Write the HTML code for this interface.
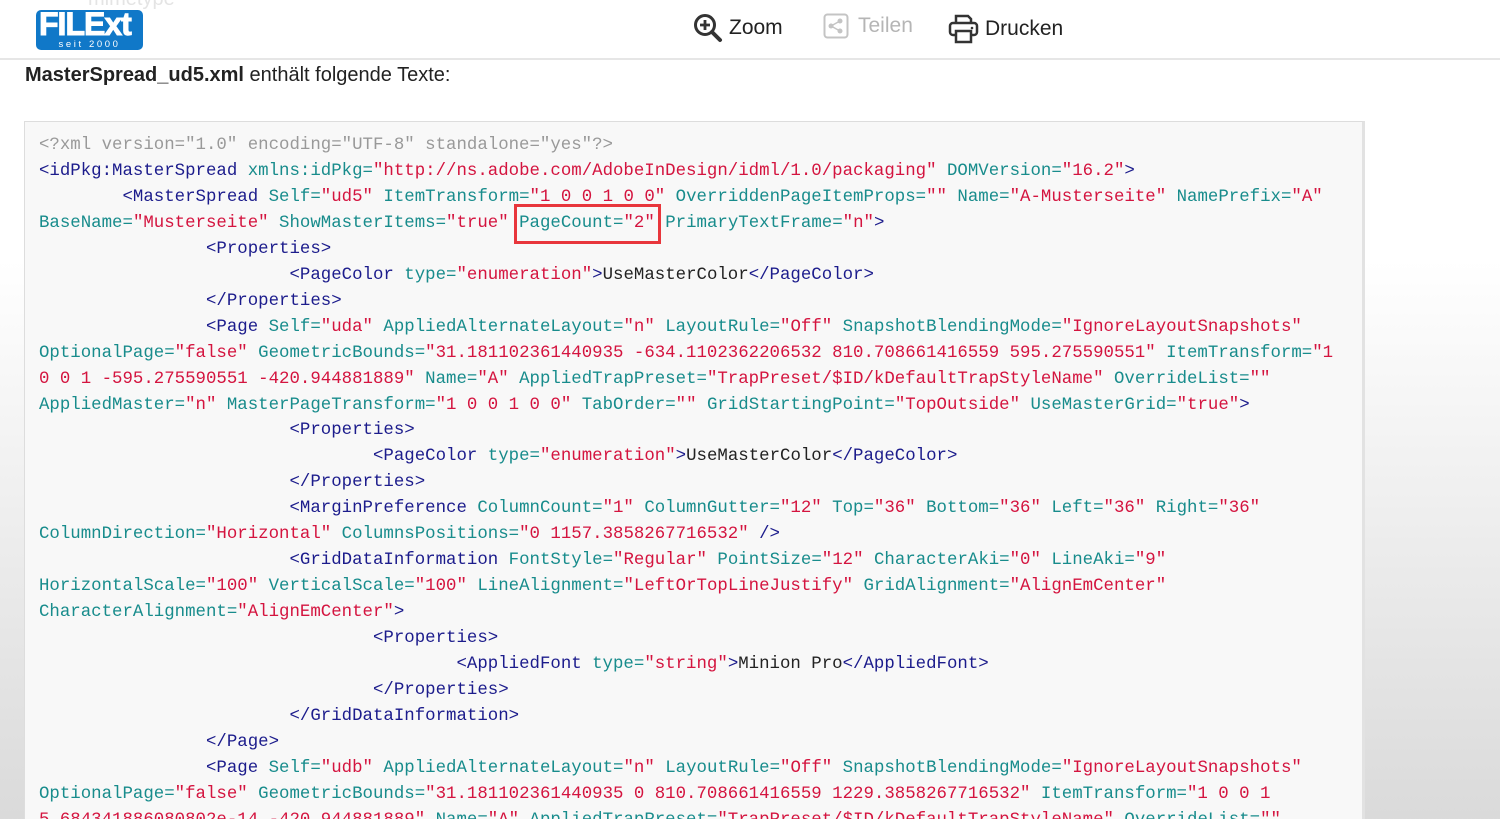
<!DOCTYPE html>
<html><head><meta charset="utf-8">
<style>
html,body{margin:0;padding:0;width:1500px;height:819px;overflow:hidden}
body{position:relative;font-family:"Liberation Sans",sans-serif;
background:linear-gradient(to bottom,#fff 0px,#fff 260px,#dadada 819px);}
.hdr{position:absolute;left:0;top:0;width:1500px;height:58px;background:#fff;border-bottom:2px solid #e6e6e6}
.mime{position:absolute;left:88px;top:-12px;font-size:20px;color:#e4e4e4}
.logo{position:absolute;left:36px;top:10px;width:107px;height:40px;background:#1078c8;border-radius:5px}
.logo .big{position:absolute;left:3px;top:-4px;font:900 32px "Liberation Sans",sans-serif;color:#fff;letter-spacing:-1px;-webkit-text-stroke:1px #fff}
.logo .small{position:absolute;left:0;width:107px;top:29px;text-align:center;font-size:9.5px;color:#fff;letter-spacing:2.6px}
.nav{position:absolute;top:13px;font-size:21px;color:#222;display:flex;align-items:center}
h1{position:absolute;left:25px;top:64px;margin:0;font-size:20px;font-weight:normal;color:#222}
.box{position:absolute;left:24px;top:121px;width:1337px;height:720px;background:#f8f8f8;border:1px solid #ddd;border-right:3px solid #e2e2e2}
pre{position:absolute;left:14px;top:11px;margin:0;font:17.4px/25.95px "Liberation Mono",monospace;color:#222}
.p{color:#999}.t{color:#1c1c8c}.a{color:#188c8c}.v{color:#d4143f}
.red{position:absolute;left:514px;top:204px;width:141px;height:34px;border:3px solid #e8363c}
</style></head><body>
<div class="hdr">
 <div class="mime">mimetype</div>
 <div class="logo"><div class="big">FILExt</div><div class="small">seit 2000</div></div>
 <div class="nav" style="left:693px">
  <svg width="30" height="30" viewBox="0 0 30 30"><circle cx="12" cy="12" r="9.5" fill="none" stroke="#333" stroke-width="3"/><path d="M7 12h10M12 7v10" stroke="#333" stroke-width="2.8"/><path d="M19 19l8 8" stroke="#333" stroke-width="4" stroke-linecap="round"/></svg>
  <span style="margin-left:6px">Zoom</span></div>
 <div class="nav" style="left:823px;color:#b5b5b5">
  <svg width="26" height="26" viewBox="0 0 26 26"><rect x="1.5" y="1.5" width="23" height="23" rx="3" fill="none" stroke="#c4c4c4" stroke-width="2"/><circle cx="8" cy="13" r="2.5" fill="#c4c4c4"/><circle cx="17" cy="8" r="2.5" fill="#c4c4c4"/><circle cx="17" cy="18" r="2.5" fill="#c4c4c4"/><path d="M8 13L17 8M8 13L17 18" stroke="#c4c4c4" stroke-width="1.5"/></svg>
  <span style="margin-left:9px">Teilen</span></div>
 <div class="nav" style="left:948px">
  <svg width="31" height="31" viewBox="0 0 31 31"><path d="M8 10V3h12l3 3v4" fill="none" stroke="#333" stroke-width="2.5"/><rect x="2" y="10" width="27" height="12" rx="3" fill="none" stroke="#333" stroke-width="2.5"/><rect x="8" y="18" width="15" height="11" fill="#fff" stroke="#333" stroke-width="2.5"/><circle cx="24" cy="15" r="1.3" fill="#333"/></svg>
  <span style="margin-left:6px">Drucken</span></div>
</div>
<h1><b>MasterSpread_ud5.xml</b> enthält folgende Texte:</h1>
<div class="box"><pre><span class="p">&lt;?xml version="1.0" encoding="UTF-8" standalone="yes"?&gt;</span>
<span class="t">&lt;idPkg:MasterSpread</span> <span class="a">xmlns:idPkg=</span><span class="v">"http://ns.adobe.com/AdobeInDesign/idml/1.0/packaging"</span> <span class="a">DOMVersion=</span><span class="v">"16.2"</span><span class="t">&gt;</span>
        <span class="t">&lt;MasterSpread</span> <span class="a">Self=</span><span class="v">"ud5"</span> <span class="a">ItemTransform=</span><span class="v">"1 0 0 1 0 0"</span> <span class="a">OverriddenPageItemProps=</span><span class="v">""</span> <span class="a">Name=</span><span class="v">"A-Musterseite"</span> <span class="a">NamePrefix=</span><span class="v">"A"</span>
<span class="a">BaseName=</span><span class="v">"Musterseite"</span> <span class="a">ShowMasterItems=</span><span class="v">"true"</span> <span class="a">PageCount=</span><span class="v">"2"</span> <span class="a">PrimaryTextFrame=</span><span class="v">"n"</span><span class="t">&gt;</span>
                <span class="t">&lt;Properties&gt;</span>
                        <span class="t">&lt;PageColor</span> <span class="a">type=</span><span class="v">"enumeration"</span><span class="t">&gt;</span>UseMasterColor<span class="t">&lt;/PageColor&gt;</span>
                <span class="t">&lt;/Properties&gt;</span>
                <span class="t">&lt;Page</span> <span class="a">Self=</span><span class="v">"uda"</span> <span class="a">AppliedAlternateLayout=</span><span class="v">"n"</span> <span class="a">LayoutRule=</span><span class="v">"Off"</span> <span class="a">SnapshotBlendingMode=</span><span class="v">"IgnoreLayoutSnapshots"</span>
<span class="a">OptionalPage=</span><span class="v">"false"</span> <span class="a">GeometricBounds=</span><span class="v">"31.181102361440935 -634.1102362206532 810.708661416559 595.275590551"</span> <span class="a">ItemTransform=</span><span class="v">"1
0 0 1 -595.275590551 -420.944881889"</span> <span class="a">Name=</span><span class="v">"A"</span> <span class="a">AppliedTrapPreset=</span><span class="v">"TrapPreset/$ID/kDefaultTrapStyleName"</span> <span class="a">OverrideList=</span><span class="v">""</span>
<span class="a">AppliedMaster=</span><span class="v">"n"</span> <span class="a">MasterPageTransform=</span><span class="v">"1 0 0 1 0 0"</span> <span class="a">TabOrder=</span><span class="v">""</span> <span class="a">GridStartingPoint=</span><span class="v">"TopOutside"</span> <span class="a">UseMasterGrid=</span><span class="v">"true"</span><span class="t">&gt;</span>
                        <span class="t">&lt;Properties&gt;</span>
                                <span class="t">&lt;PageColor</span> <span class="a">type=</span><span class="v">"enumeration"</span><span class="t">&gt;</span>UseMasterColor<span class="t">&lt;/PageColor&gt;</span>
                        <span class="t">&lt;/Properties&gt;</span>
                        <span class="t">&lt;MarginPreference</span> <span class="a">ColumnCount=</span><span class="v">"1"</span> <span class="a">ColumnGutter=</span><span class="v">"12"</span> <span class="a">Top=</span><span class="v">"36"</span> <span class="a">Bottom=</span><span class="v">"36"</span> <span class="a">Left=</span><span class="v">"36"</span> <span class="a">Right=</span><span class="v">"36"</span>
<span class="a">ColumnDirection=</span><span class="v">"Horizontal"</span> <span class="a">ColumnsPositions=</span><span class="v">"0 1157.3858267716532"</span> <span class="t">/&gt;</span>
                        <span class="t">&lt;GridDataInformation</span> <span class="a">FontStyle=</span><span class="v">"Regular"</span> <span class="a">PointSize=</span><span class="v">"12"</span> <span class="a">CharacterAki=</span><span class="v">"0"</span> <span class="a">LineAki=</span><span class="v">"9"</span>
<span class="a">HorizontalScale=</span><span class="v">"100"</span> <span class="a">VerticalScale=</span><span class="v">"100"</span> <span class="a">LineAlignment=</span><span class="v">"LeftOrTopLineJustify"</span> <span class="a">GridAlignment=</span><span class="v">"AlignEmCenter"</span>
<span class="a">CharacterAlignment=</span><span class="v">"AlignEmCenter"</span><span class="t">&gt;</span>
                                <span class="t">&lt;Properties&gt;</span>
                                        <span class="t">&lt;AppliedFont</span> <span class="a">type=</span><span class="v">"string"</span><span class="t">&gt;</span>Minion Pro<span class="t">&lt;/AppliedFont&gt;</span>
                                <span class="t">&lt;/Properties&gt;</span>
                        <span class="t">&lt;/GridDataInformation&gt;</span>
                <span class="t">&lt;/Page&gt;</span>
                <span class="t">&lt;Page</span> <span class="a">Self=</span><span class="v">"udb"</span> <span class="a">AppliedAlternateLayout=</span><span class="v">"n"</span> <span class="a">LayoutRule=</span><span class="v">"Off"</span> <span class="a">SnapshotBlendingMode=</span><span class="v">"IgnoreLayoutSnapshots"</span>
<span class="a">OptionalPage=</span><span class="v">"false"</span> <span class="a">GeometricBounds=</span><span class="v">"31.181102361440935 0 810.708661416559 1229.3858267716532"</span> <span class="a">ItemTransform=</span><span class="v">"1 0 0 1
5.684341886080802e-14 -420.944881889"</span> <span class="a">Name=</span><span class="v">"A"</span> <span class="a">AppliedTrapPreset=</span><span class="v">"TrapPreset/$ID/kDefaultTrapStyleName"</span> <span class="a">OverrideList=</span><span class="v">""</span></pre></div>
<div class="red"></div>
</body></html>
